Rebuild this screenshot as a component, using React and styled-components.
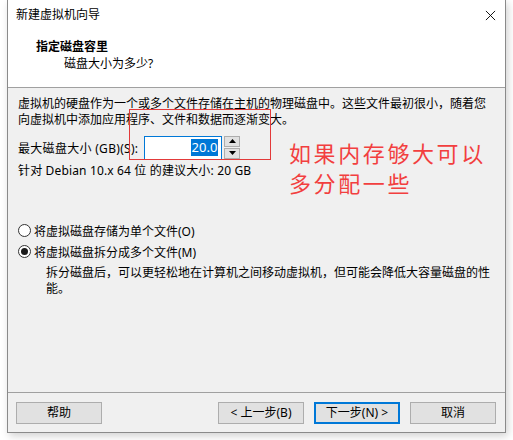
import React from "react";
import styled, { createGlobalStyle } from "styled-components";

const GlobalStyle = createGlobalStyle`
  html, body {
    margin: 0;
    padding: 0;
    background: #ffffff;
  }
  body {
    font-family: "Noto Sans", "Noto Sans CJK SC", sans-serif;
    font-size: 12px;
    color: #000;
  }
`;

const App = () => {
  return (
    <>
      <GlobalStyle />
      <Page>
        <Window>
          <TitleBar>
            <span>新建虚拟机向导</span>
            <CloseIcon viewBox="0 0 12 12">
              <path d="M1 1 L11 11 M11 1 L1 11" stroke="#000" strokeWidth="1" />
            </CloseIcon>
          </TitleBar>
          <Header>
            <HeaderTitle>指定磁盘容里</HeaderTitle>
            <HeaderSub>磁盘大小为多少?</HeaderSub>
          </Header>
          <Body>
            <Paragraph>
              虚拟机的硬盘作为一个或多个文件存储在主机的物理磁盘中。这些文件最初很小，随着您
              <br />
              向虚拟机中添加应用程序、文件和数据而逐渐变大。
            </Paragraph>
            <SizeRow>
              <SizeLabel>最大磁盘大小 (GB)(S):</SizeLabel>
              <Input>
                <Selected>20.0</Selected>
              </Input>
              <Spinner>
                <SpinButton>
                  <svg width="7" height="4" viewBox="0 0 7 4">
                    <path d="M3.5 0 L7 4 L0 4 Z" fill="#000" />
                  </svg>
                </SpinButton>
                <SpinButton>
                  <svg width="7" height="4" viewBox="0 0 7 4">
                    <path d="M0 0 L7 0 L3.5 4 Z" fill="#000" />
                  </svg>
                </SpinButton>
              </Spinner>
              <Highlight />
            </SizeRow>
            <Hint>针对 Debian 10.x 64 位 的建议大小: 20 GB</Hint>
            <Note>
              如果内存够大可以
              <br />
              多分配一些
            </Note>
            <Options>
              <Option>
                <Radio />
                <span>将虚拟磁盘存储为单个文件(O)</span>
              </Option>
              <Option>
                <Radio checked />
                <span>将虚拟磁盘拆分成多个文件(M)</span>
              </Option>
              <OptionNote>
                拆分磁盘后，可以更轻松地在计算机之间移动虚拟机，但可能会降低大容量磁盘的性
                <br />
                能。
              </OptionNote>
            </Options>
          </Body>
          <Footer>
            <Button>帮助</Button>
            <Spacer />
            <Button>&lt; 上一步(B)</Button>
            <Button primary>下一步(N) &gt;</Button>
            <Button>取消</Button>
          </Footer>
        </Window>
      </Page>
    </>
  );
};

const Page = styled.div`
  width: 513px;
  height: 440px;
  padding-left: 7px;
  box-sizing: border-box;
  overflow: hidden;
`;

const Window = styled.div`
  width: 499px;
  height: 433px;
  box-sizing: border-box;
  border: 1px solid #8a8a8a;
  border-top: none;
  background: #f0f0f0;
  box-shadow: 2px 3px 8px rgba(0, 0, 0, 0.18);
  display: flex;
  flex-direction: column;
`;

const TitleBar = styled.div`
  height: 30px;
  background: #ffffff;
  display: flex;
  align-items: center;
  justify-content: space-between;
  padding: 0 8px 0 8px;
  font-size: 12px;
  line-height: 16px;
`;

const CloseIcon = styled.svg`
  width: 11px;
  height: 11px;
  margin-right: 1px;
`;

const Header = styled.div`
  background: #ffffff;
  border-bottom: 1px solid #a0a0a0;
  box-sizing: border-box;
  height: 58px;
  padding: 8px 0 0 28px;
`;

const HeaderTitle = styled.div`
  font-weight: bold;
  font-size: 12px;
  line-height: 17px;
`;

const HeaderSub = styled.div`
  padding-left: 28px;
  line-height: 17px;
`;

const Body = styled.div`
  flex: 1;
  position: relative;
  padding: 8px 10px 0 10px;
  display: flex;
  flex-direction: column;
`;

const Paragraph = styled.p`
  margin: 0;
  line-height: 16px;
  white-space: nowrap;
`;

const SizeRow = styled.div`
  position: relative;
  display: flex;
  align-items: center;
  margin-top: 7px;
  height: 25px;
`;

const SizeLabel = styled.span`
  letter-spacing: 0.3px;
  margin-right: 6px;
`;

const Input = styled.div`
  width: 78px;
  height: 24px;
  box-sizing: border-box;
  border: 1px solid #0078d7;
  background: #fff;
  display: flex;
  align-items: center;
  justify-content: flex-end;
  padding-right: 3px;
`;

const Selected = styled.span`
  background: #0078d7;
  color: #fff;
  font-size: 13px;
  line-height: 17px;
  padding: 0 1px;
`;

const Spinner = styled.div`
  display: flex;
  flex-direction: column;
  gap: 1px;
  margin-left: 2px;
  height: 24px;
`;

const SpinButton = styled.div`
  width: 16px;
  height: 11px;
  box-sizing: border-box;
  border: 1px solid #adadad;
  background: #e1e1e1;
  display: flex;
  align-items: center;
  justify-content: center;
`;

const Highlight = styled.div`
  position: absolute;
  left: 111px;
  top: -26px;
  width: 140px;
  height: 49px;
  border: 1px solid #e33a3a;
  pointer-events: none;
`;

const Hint = styled.div`
  margin-top: 3px;
  line-height: 16px;
  letter-spacing: 0.15px;
`;

const Note = styled.div`
  position: absolute;
  left: 281px;
  top: 49px;
  color: #f23f3f;
  font-family: "Noto Sans CJK SC", sans-serif;
  font-size: 22px;
  letter-spacing: 2.6px;
  line-height: 30px;
`;

const Options = styled.div`
  margin-top: 41px;
  display: flex;
  flex-direction: column;
`;

const Option = styled.label`
  display: flex;
  align-items: center;
  height: 21px;
  gap: 3px;
`;

const Radio = styled.span`
  width: 13px;
  height: 13px;
  box-sizing: border-box;
  border: 1px solid #333;
  border-radius: 50%;
  background: #fff;
  display: flex;
  align-items: center;
  justify-content: center;
  &::after {
    content: "";
    width: 7px;
    height: 7px;
    border-radius: 50%;
    background: ${(p) => (p.checked ? "#1a1a1a" : "transparent")};
  }
`;

const OptionNote = styled.p`
  margin: 3px 0 0 28px;
  line-height: 16px;
  white-space: nowrap;
`;

const Footer = styled.div`
  height: 40px;
  box-sizing: border-box;
  border-top: 1px solid #a0a0a0;
  display: flex;
  align-items: flex-start;
  padding: 9px 9px 0 8px;
  gap: 10px;
`;

const Spacer = styled.div`
  flex: 1;
`;

const Button = styled.button`
  width: 86px;
  height: 22px;
  box-sizing: border-box;
  border: ${(p) => (p.primary ? "2px solid #0078d7" : "1px solid #adadad")};
  background: #e1e1e1;
  font-family: "Noto Sans", "Noto Sans CJK SC", sans-serif;
  font-size: 12px;
  line-height: 16px;
  color: #000;
  padding: 0;
  display: flex;
  align-items: center;
  justify-content: center;
`;

export default App;
